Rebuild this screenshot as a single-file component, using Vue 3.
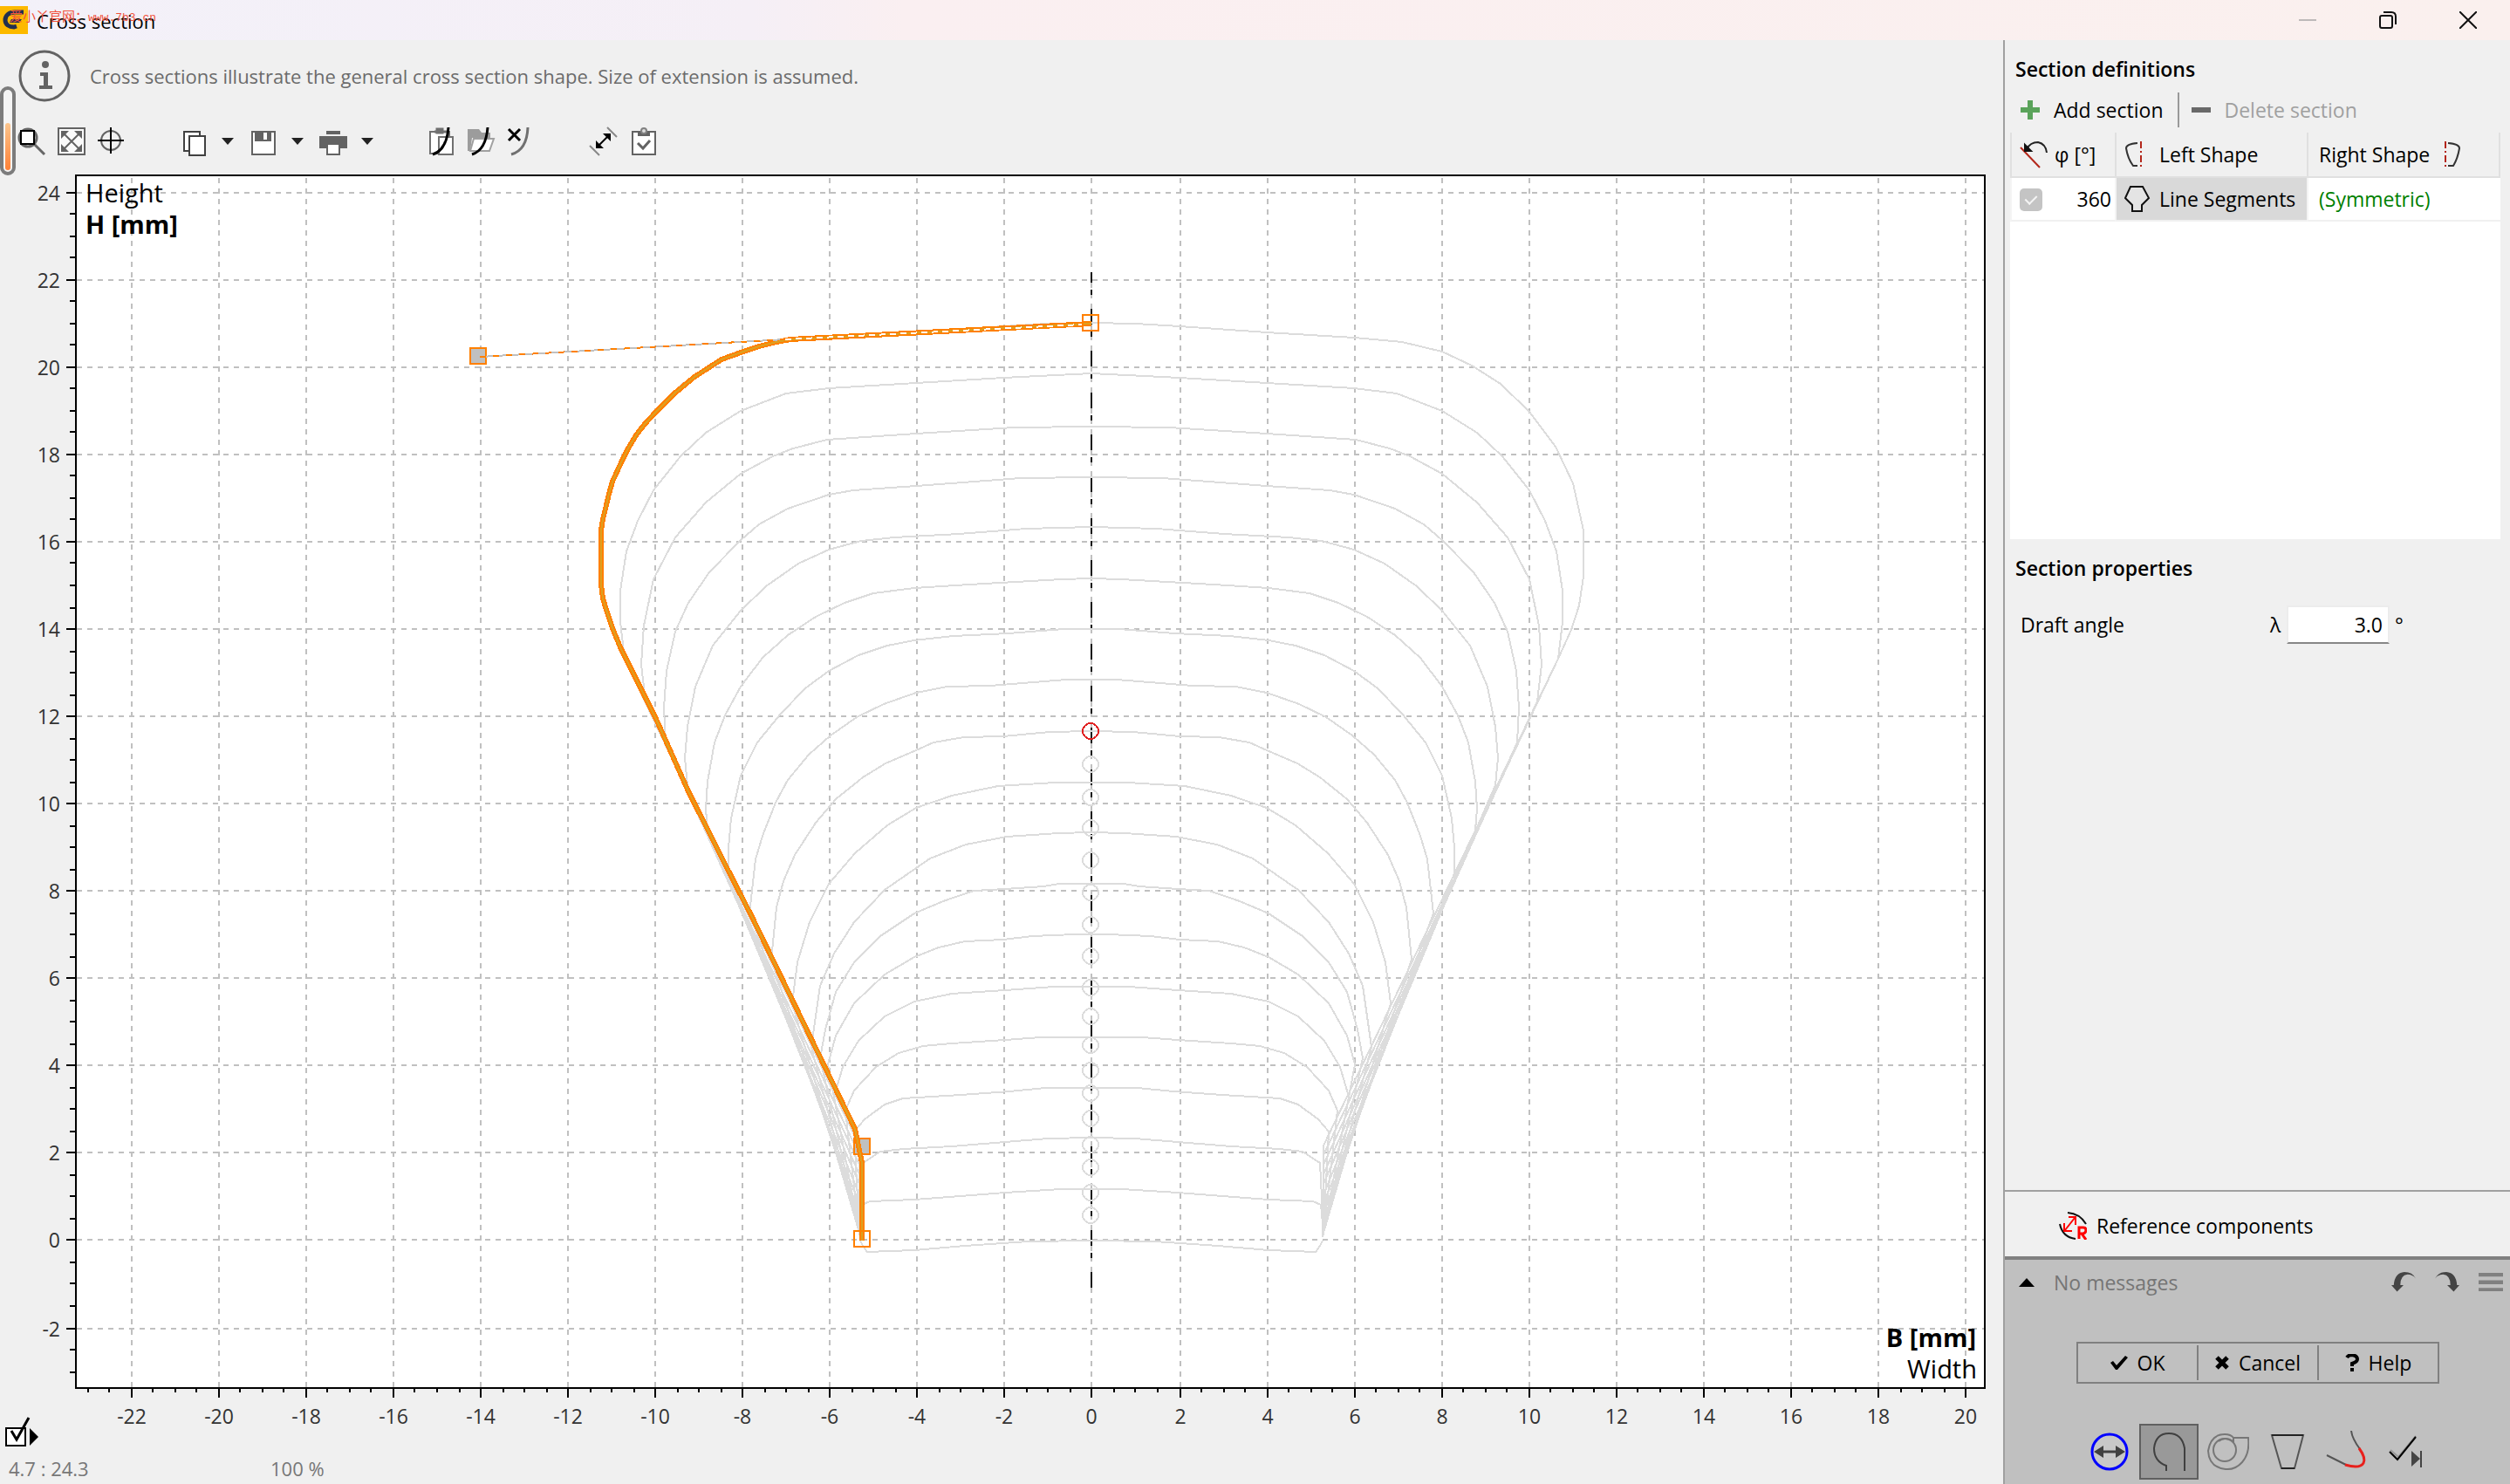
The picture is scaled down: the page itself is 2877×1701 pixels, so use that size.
<script setup>
import { ref } from 'vue'

const draftAngle = ref('3.0')

const px = v => 2 * Math.floor(625.95 + 25.03 * v) + 1
const py = v => 2 * Math.floor(710.95 - 25.03 * v) + 1

const range = (from, to, step) => {
  const out = []
  for (let v = from; v <= to; v += step) out.push(v)
  return out
}
const xMajor = range(-22, 20, 2)
const yMajor = range(-2, 24, 2)
const xMinor = range(-23, 20, 0.5).filter(v => v % 2 !== 0)
const yMinor = range(-3, 24, 0.5).filter(v => v % 2 !== 0)

const axisX = 1251

// Right half of every cross section, from the crown down to the flank
const sections = [
  '1251,370 1301,371 1352,374 1452,381 1552,387 1607,392 1653,403 1687,419 1720,440 1753,472 1783,512 1803,554 1815,608 1815,661 1810,694 1801,722 1785,757',
  '1251,428 1352,433 1452,439 1552,445 1601,451 1653,471 1693,496 1722,523 1753,562 1771,597 1784,632 1791,677 1791,713 1786,755',
  '1251,489 1340,490 1452,497 1554,504 1593,514 1616,523 1653,543 1693,576 1728,616 1753,664 1764,717 1767,762 1762,804',
  '1251,547 1332,548 1452,557 1524,562 1552,567 1599,583 1632,601 1654,620 1689,656 1713,691 1728,724 1738,769 1741,811 1739,851',
  '1251,604 1326,606 1403,612 1477,616 1515,620 1552,630 1587,646 1624,672 1653,700 1685,740 1705,787 1714,833 1717,869 1714,900',
  '1251,663 1285,664 1391,670 1454,674 1501,680 1534,691 1567,707 1599,728 1628,754 1653,787 1671,820 1683,851 1691,896 1693,927 1691,952',
  '1251,721 1283,721 1346,726 1409,729 1454,734 1485,740 1518,751 1552,769 1579,789 1607,818 1634,851 1653,889 1664,938 1667,972 1667,1001',
  '1251,779 1280,779 1367,786 1416,787 1452,794 1489,807 1520,822 1550,843 1575,865 1599,894 1613,920 1628,958 1636,985 1643,1047',
  '1251,838 1299,839 1352,844 1397,845 1432,851 1452,860 1487,875 1513,891 1544,916 1567,943 1591,980 1604,1010 1612,1040 1618,1100',
  '1251,897 1293,897 1358,901 1411,912 1452,926 1485,946 1522,978 1552,1013 1574,1057 1588,1103 1594,1150',
  '1251,954 1289,955 1348,959 1395,968 1436,984 1488,1020 1523,1057 1546,1093 1562,1130 1572,1200',
  '1251,1013 1288,1013 1306,1016 1350,1019 1386,1021 1421,1033 1454,1047 1493,1073 1523,1103 1544,1137 1556,1180 1562,1213',
  '1251,1071 1270,1071 1319,1073 1352,1077 1396,1079 1426,1086 1454,1097 1488,1117 1523,1150 1544,1187 1553,1220',
  '1251,1131 1294,1131 1350,1135 1411,1139 1454,1148 1488,1165 1518,1193 1536,1223 1546,1257',
  '1251,1189 1309,1189 1350,1192 1411,1196 1444,1199 1472,1207 1498,1223 1523,1250 1533,1273',
  '1251,1247 1304,1247 1345,1251 1401,1255 1467,1259 1488,1266 1511,1283 1523,1297',
  '1251,1304 1301,1305 1350,1309 1411,1314 1467,1317 1493,1320 1513,1333',
  '1251,1363 1286,1363 1350,1367 1401,1371 1454,1375 1505,1377 1514,1381',
].map((points, i) => `${points} 1517,${Math.round(1313 + 100 * Math.min(1, i / 9))} 1516,1418`)
sections.push('1251,1422 1324,1423 1396,1428 1454,1433 1508,1435 1513,1428 1516,1422')

const mirror = points =>
  points.split(' ').map(p => {
    const [x, y] = p.split(',').map(Number)
    return `${2 * axisX - x},${y}`
  }).join(' ')

const outlines = sections.flatMap(s => [s, mirror(s)])

const activeOutline =
  '1251,371 906,389 890,392 870,397 852,403 827,412 796,432 773,451 752,472 739,486 729,499 720,514 713,528 707,541 702,552 698,566 695,579 691,595 689,608 689,670 691,686 695,699 702,720 711,742 752,824 789,907 845,1018 861,1049 980,1294 988,1333 988,1422'

const centers = [876, 914, 949, 986, 1023, 1060, 1096, 1132, 1165, 1198, 1227, 1253, 1282, 1312, 1338, 1367, 1393]
</script>

<template>
  <div class="window">
    <header class="titlebar">
      <svg class="app-logo" viewBox="0 0 32 32">
        <rect width="32" height="32" fill="#fdb900" />
        <path d="M27 7H17C10 7 6 11 6 16c0 5 4 8 10 8l3-1" fill="none" stroke="#23304f" stroke-width="5" />
        <path d="M25 15H13l-2 4h11z" fill="#23304f" />
      </svg>
      <h1>Cross section</h1>
      <div class="watermark">爱小丫官网：<span>www.7b3.cn</span></div>
      <div class="controls">
        <button disabled aria-label="Minimize"><svg viewBox="0 0 20 20"><path d="M0 10h20" stroke="#bdb9b9" stroke-width="2" /></svg></button>
        <button aria-label="Restore"><svg viewBox="0 0 20 20" fill="none" stroke="#111" stroke-width="2"><rect x="1" y="5" width="14" height="14" rx="2" /><path d="M5 1h9q5 0 5 5v9" /></svg></button>
        <button aria-label="Close"><svg viewBox="0 0 20 20"><path d="M0 0l20 20M20 0L0 20" stroke="#111" stroke-width="2" /></svg></button>
      </div>
    </header>

    <div class="body">
      <main class="workspace">
        <div class="level"><i></i></div>
        <div class="info">
          <svg viewBox="0 0 60 60"><circle cx="30" cy="30" r="28" fill="none" stroke="#636363" stroke-width="3" /><circle cx="31" cy="17" r="4" fill="#636363" /><path d="M25 26h9v15h5v4H24v-4h5V30h-4z" fill="#636363" /></svg>
          <p>Cross sections illustrate the general cross section shape. Size of extension is assumed.</p>
        </div>

        <div class="toolbar" role="toolbar">
          <div class="group">
            <button aria-label="Zoom"><svg viewBox="0 0 32 32" fill="none"><circle cx="12" cy="12" r="10" stroke="#666" stroke-width="3" /><path d="M19 19l12 12" stroke="#666" stroke-width="3" /><rect x="4" y="4" width="15" height="15" fill="#fff" stroke="#000" stroke-width="2" /></svg></button>
            <button aria-label="Fit to window"><svg viewBox="0 0 32 32"><rect x="1" y="1" width="30" height="30" fill="#fafafa" stroke="#636363" stroke-width="2" /><path d="M7 7l18 18M25 7L7 25" stroke="#636363" stroke-width="2" /><path d="M4 4h9l-9 9zM28 4h-9l9 9zM4 28h9l-9-9zM28 28h-9l9-9z" fill="#636363" /></svg></button>
            <button aria-label="Center"><svg viewBox="0 0 32 32" fill="none"><circle cx="15" cy="15" r="11" stroke="#636363" stroke-width="2" /><path d="M15 0v30M0 15h30" stroke="#000" stroke-width="2" /></svg></button>
          </div>
          <div class="group wide">
            <div class="pair">
              <button aria-label="Copy"><svg viewBox="0 0 32 32" fill="#fff" stroke="#404040" stroke-width="2"><rect x="5" y="5" width="18" height="22" /><rect x="11" y="10" width="18" height="22" /></svg></button>
              <button class="caret" aria-label="Copy options"></button>
            </div>
            <div class="pair">
              <button aria-label="Save"><svg viewBox="0 0 32 32"><rect x="3" y="5" width="26" height="26" fill="#fff" stroke="#636363" stroke-width="2" /><path d="M6 4h19v12H6z" fill="#636363" /><path d="M16 6h4v8h-4z" fill="#fff" /></svg></button>
              <button class="caret" aria-label="Save options"></button>
            </div>
            <div class="pair">
              <button aria-label="Print"><svg viewBox="0 0 32 32"><path d="M8 4h16v4H8zM0 10h32v14H0z" fill="#636363" /><rect x="9" y="19" width="14" height="12" fill="#fff" stroke="#636363" stroke-width="2" /></svg></button>
              <button class="caret" aria-label="Print options"></button>
            </div>
          </div>
          <div class="group">
            <button aria-label="Paste curve"><svg viewBox="0 0 32 32" fill="#fff" stroke="#707070" stroke-width="2"><rect x="3" y="5" width="22" height="25" /><path d="M8 5h14M11 2h6v4h-6z" stroke-width="3" /><rect x="13" y="11" width="16" height="20" /><path d="M24 0q-2 26-18 31" fill="none" stroke="#000" stroke-width="3" /></svg></button>
            <button aria-label="Open curve"><svg viewBox="0 0 32 32"><path d="M0 2h13l3 4h10v6H5L3 27H0z" fill="#9c9c9c" /><path d="M7 13h23l-5 14H3z" fill="#fff" stroke="#a0a0a0" stroke-width="2" /><path d="M23 0q-2 26-18 31" fill="none" stroke="#000" stroke-width="3" /></svg></button>
            <button aria-label="Remove curve"><svg viewBox="0 0 32 32" fill="none"><path d="M23 0q-1 26-19 31" stroke="#707070" stroke-width="3" /><path d="M1 2l13 13M14 2L1 15" stroke="#000" stroke-width="3" /></svg></button>
          </div>
          <div class="group">
            <button aria-label="Measure"><svg viewBox="0 0 32 32"><path d="M0 21l11 11M20 0l11 11" stroke="#888" stroke-width="2" /><path d="M9 22L22 9" stroke="#000" stroke-width="2" /><path d="M7 24v-9l9 9zM24 7v9l-9-9z" fill="#000" /></svg></button>
            <button aria-label="Check"><svg viewBox="0 0 32 32"><rect x="3" y="5" width="26" height="26" fill="#fff" stroke="#636363" stroke-width="2" /><path d="M9 5h14v5H9z" fill="#636363" /><circle cx="16" cy="4" r="3" fill="#ddd" stroke="#808080" stroke-width="2" /><path d="M9 18l6 6 8-9" fill="none" stroke="#636363" stroke-width="3" /></svg></button>
          </div>
        </div>

        <svg class="chart" viewBox="0 190 2296 1450">
          <rect x="87" y="201" width="2188" height="1390" fill="#fff" />
          <g shape-rendering="crispEdges">
            <g stroke="#c0c0c0" stroke-width="2" stroke-dasharray="6 6">
              <line v-for="v in xMajor" :key="'gx' + v" :x1="px(v)" :x2="px(v)" y1="1590" y2="202" />
              <line v-for="v in yMajor" :key="'gy' + v" x1="88" x2="2274" :y1="py(v)" :y2="py(v)" />
            </g>
            <line :x1="axisX" :x2="axisX" y1="312" y2="1476" stroke="#111" stroke-width="2" stroke-dasharray="18 8 6 16" stroke-dashoffset="6" />
            <g fill="none" stroke="#dcdcdc" stroke-width="2">
              <polyline v-for="(line, i) in outlines" :key="'o' + i" :points="line" />
              <circle v-for="c in centers" :key="'c' + c" cx="1250" :cy="c" r="9" />
            </g>
            <circle cx="1250" cy="838" r="9" fill="none" stroke="#e02020" stroke-width="2" />
            <g fill="#c0c0c0" stroke="#ff8000" stroke-width="2">
              <rect x="539" y="399" width="18" height="18" />
              <rect x="979" y="1305" width="18" height="18" />
            </g>
            <polyline :points="activeOutline" fill="none" stroke="#ff8000" stroke-width="6" />
            <polyline :points="activeOutline" fill="none" stroke="#dda020" stroke-width="2" />
            <line x1="900" y1="389" x2="1240" y2="372" stroke="#fff" stroke-width="2" stroke-dasharray="7 5" />
            <line x1="550" y1="409" x2="900" y2="389" stroke="#c0c0c0" stroke-width="2" />
            <line x1="550" y1="409" x2="900" y2="389" stroke="#ff8000" stroke-width="2" stroke-dasharray="7 8" />
            <g fill="none" stroke="#ff8000" stroke-width="2">
              <rect x="1241" y="361" width="18" height="18" />
              <rect x="979" y="1411" width="18" height="18" />
            </g>
            <rect x="87" y="201" width="2188" height="1390" fill="none" stroke="#000" stroke-width="2" />
            <g stroke="#000" stroke-width="2">
              <line v-for="v in xMajor" :key="'tx' + v" :x1="px(v)" :x2="px(v)" y1="1592" y2="1602" />
              <line v-for="v in xMinor" :key="'sx' + v" :x1="px(v)" :x2="px(v)" y1="1592" y2="1596" />
              <line v-for="v in yMajor" :key="'ty' + v" x1="76" x2="86" :y1="py(v)" :y2="py(v)" />
              <line v-for="v in yMinor" :key="'sy' + v" x1="80" x2="86" :y1="py(v)" :y2="py(v)" />
            </g>
          </g>
          <g class="ticks">
            <text v-for="v in xMajor" :key="'lx' + v" :x="px(v)" y="1632" text-anchor="middle">{{ v }}</text>
            <text v-for="v in yMajor" :key="'ly' + v" x="69" :y="py(v) + 9" text-anchor="end">{{ v }}</text>
          </g>
          <g class="axis-title">
            <text x="98" y="232">Height</text>
            <text x="98" y="268" class="strong">H [mm]</text>
            <text x="2265" y="1544" text-anchor="end" class="strong">B [mm]</text>
            <text x="2266" y="1580" text-anchor="end">Width</text>
          </g>
        </svg>

        <footer class="status">
          <button class="display-options" aria-label="Display options"><svg viewBox="0 0 38 34"><rect x="1" y="13" width="22" height="20" fill="#fff" stroke="#000" stroke-width="2" /><path d="M7 16l6 10L27 1" fill="none" stroke="#000" stroke-width="3" /><path d="M28 13l10 10-10 10z" /></svg></button>
          <span class="coords">4.7 : 24.3</span>
          <span>100 %</span>
        </footer>
      </main>

      <aside class="panel">
        <section class="definitions">
          <h2>Section definitions</h2>
          <div class="actions">
            <button><svg viewBox="0 0 22 22"><path d="M8 0h6v8h8v6h-8v8H8v-8H0V8h8z" fill="#5aa35a" /></svg>Add section</button>
            <button class="delete" disabled><svg viewBox="0 0 22 22"><path d="M0 8h22v6H0z" fill="#696969" /></svg>Delete section</button>
          </div>
          <div class="table-box">
            <table>
              <colgroup><col class="c-angle"><col class="c-left"><col></colgroup>
              <thead>
                <tr>
                  <th><div class="cell angle"><svg viewBox="0 0 32 32" fill="none" stroke-width="2"><path d="M1 8l22 23" stroke="#b3261a" /><path d="M8 10Q12 2 21 2q9 2 10 12" stroke="#222" /><path d="M6 5v7h7z" fill="#111" stroke="#111" /></svg>φ [°]</div></th>
                  <th><div class="cell"><svg viewBox="0 0 32 32" fill="none" stroke-width="2"><path d="M15 3Q2 4 2 9q2 12 8 20h5" stroke="#333" /><path d="M19 1v30" stroke="#b3261a" stroke-dasharray="8 3 2 3" /></svg>Left Shape</div></th>
                  <th><div class="cell">Right Shape<svg class="right-icon" viewBox="0 0 32 32" fill="none" stroke-width="2"><path d="M2 1v30" stroke="#b3261a" stroke-dasharray="8 3 2 3" /><path d="M5 3q13 1 13 6-2 12-7 20H5" stroke="#333" /></svg></div></th>
                </tr>
              </thead>
              <tbody>
                <tr>
                  <td><div class="cell angle"><input type="checkbox" checked disabled aria-label="Section active"><span class="value">360</span></div></td>
                  <td class="selected"><div class="cell"><svg viewBox="0 0 32 32"><path d="M7 2h14l7 13-8 8v7H9v-7L1 15z" fill="#e4e4e4" stroke="#111" stroke-width="2" /></svg>Line Segments</div></td>
                  <td><div class="cell symmetric">(Symmetric)</div></td>
                </tr>
              </tbody>
            </table>
          </div>
        </section>

        <section class="properties">
          <h2>Section properties</h2>
          <div class="field">
            <label for="draft">Draft angle</label>
            <span class="symbol">λ</span>
            <input id="draft" v-model="draftAngle" type="text">
            <span class="unit">°</span>
          </div>
        </section>

        <button class="reference"><svg viewBox="0 0 32 32" fill="none" stroke-width="2"><path d="M10 1q14 1 21 13M1 14q3 15 18 17" stroke="#111" /><path d="M7 21L18 7M6 13v9h9M11 6h8v9" stroke="#f00" /><path d="M23 31V18h5q3 0 3 3t-3 4h-5M26 25l5 7" stroke="#f00" stroke-width="3" /></svg>Reference components</button>

        <div class="dock">
          <div class="messages">
            <button class="expand" aria-label="Expand messages"></button>
            <span>No messages</span>
            <div class="history">
              <button aria-label="Undo"><svg viewBox="0 0 30 24"><path d="M30 8Q26 0 16 0 4 1 3 16H0l7 8 8-8h-4q0-12 9-13 6 0 10 5z" fill="#444" /></svg></button>
              <button aria-label="Redo"><svg viewBox="0 0 30 24"><path d="M0 8Q4 0 14 0q12 1 13 16h3l-7 8-8-8h4Q19 4 10 3 4 3 0 8z" fill="#444" /></svg></button>
              <button aria-label="Menu"><svg viewBox="0 0 26 20"><path d="M0 0h26v4H0zM0 8h26v4H0zM0 16h26v4H0z" fill="#808080" /></svg></button>
            </div>
          </div>
          <div class="dialog-buttons">
            <button><svg viewBox="0 0 20 20"><path d="M0 10l3-2 4 5L17 2l3 2L8 18H6z" /></svg>OK</button>
            <button><svg viewBox="0 0 16 20"><path d="M2 4l12 12M14 4L2 16" stroke="#000" stroke-width="5" /></svg>Cancel</button>
            <button><svg viewBox="0 0 16 20"><path d="M2 4Q4 1 8 1q6 1 6 5 0 3-6 5v3M8 16v4" fill="none" stroke="#000" stroke-width="4" /></svg>Help</button>
          </div>
          <nav class="modes">
            <button aria-label="Diameter"><svg viewBox="0 0 48 48"><circle cx="24" cy="24" r="20" fill="#c8c8c8" stroke="#00f" stroke-width="3" /><path d="M12 24h24" stroke="#404040" stroke-width="3" /><path d="M6 24l11-7v14zM42 24l-11-7v14z" fill="#404040" /></svg></button>
            <button class="active" aria-label="Cross section"><svg viewBox="0 0 48 48" fill="none"><path d="M21 46v-6Q7 35 7 20 9 3 24 3t18 17v26" stroke="#404040" stroke-width="2" /></svg></button>
            <button aria-label="Volute"><svg viewBox="0 0 48 48" fill="none" stroke="#777" stroke-width="2"><circle cx="20" cy="22" r="13" /><path d="M29 8h18q2 18-7 28-8 9-19 8Q2 42 1 23 4 4 20 4q7 0 10 4v4Q20 6 13 12" /></svg></button>
            <button aria-label="Diffuser"><svg viewBox="0 0 48 48" fill="none"><path d="M6 5h36L32 43H17z" stroke="#555" stroke-width="2" /><path d="M6 5h36M17 43h15" stroke="#222" stroke-width="2" /></svg></button>
            <button aria-label="Cut-water"><svg viewBox="0 0 48 48" fill="none"><path d="M29 0q1 9 10 21M1 28l22 11" stroke="#555" stroke-width="2" /><path d="M38 20q8 11 5 17-4 7-21 2" stroke="#e8201c" stroke-width="3" /></svg></button>
            <button aria-label="Finish"><svg viewBox="0 0 48 48" fill="none"><path d="M6 22l9 8L35 6" stroke="#999" stroke-width="2" /><path d="M5 24l9 9L35 7" stroke="#000" stroke-width="2" /><path d="M30 23l10 9-10 9z" fill="#444" /><path d="M41 23v19" stroke="#444" stroke-width="2" /></svg></button>
          </nav>
        </div>
      </aside>
    </div>
  </div>
</template>

<style>
html, body { margin: 0; background: #f0f0f0; }
</style>

<style scoped>
.window {
  min-height: 100vh;
  display: flex;
  flex-direction: column;
  background: #f0f0f0;
  color: #000;
  font-family: "Open Sans", "Noto Sans", sans-serif;
  font-size: 23px;
  line-height: 32px;
}
svg { display: block; }
button {
  display: flex;
  align-items: center;
  padding: 0;
  border: 0;
  background: none;
  color: inherit;
  font: inherit;
}
h1, h2, p { margin: 0; font-size: inherit; }
h1 { padding-top: 2px; font-size: 22px; font-weight: 400; }
h2 { font-weight: 600; }

.titlebar {
  position: relative;
  display: flex;
  align-items: center;
  height: 46px;
  background: linear-gradient(90deg, #f3f1f9 0, #f5eff6 30%, #faeff1 36%, #faf0ee 100%);
}
.app-logo { width: 32px; height: 32px; }
h1 { margin-left: 10px; }
.watermark {
  position: absolute;
  left: 11px;
  top: 8px;
  color: #f0523c;
  font: 15px/20px "Noto Sans CJK SC", sans-serif;
  white-space: nowrap;
}
.watermark span { font-family: "Liberation Mono", monospace; font-size: 13px; }
.controls { display: flex; margin-left: auto; padding-right: 2px; }
.controls button { width: 92px; height: 46px; justify-content: center; }
.controls svg { width: 20px; }

.body { flex: 1; display: flex; }
.workspace { position: relative; flex: 1; min-width: 0; display: flex; flex-direction: column; }

.level {
  position: absolute;
  left: 0;
  top: 53px;
  box-sizing: border-box;
  width: 18px;
  height: 102px;
  padding: 2px;
  display: flex;
  align-items: flex-end;
  border: 4px solid #7c7c7c;
  border-radius: 9px;
  background: #f4f4f4;
}
.level i { width: 100%; height: 60%; border-radius: 3px; background: linear-gradient(#fbc58d, #ff8136); }

.info { display: flex; align-items: center; gap: 22px; height: 82px; padding-left: 21px; color: #6b6b6b; font-size: 22px; }
.info svg { width: 60px; }

.toolbar { display: flex; gap: 62px; height: 62px; padding-left: 20px; align-items: center; box-sizing: border-box; padding-top: 6px; }
.group { display: flex; gap: 14px; }
.group.wide { gap: 18px; }
.group svg { width: 32px; height: 32px; overflow: visible; }
.pair { display: flex; align-items: center; gap: 16px; }
.caret, .expand { width: 0; height: 0; border: 7px solid transparent; border-top: 8px solid #222; border-bottom: 0; }

.chart { width: 100%; }
.chart text { fill: #333; }
.chart .axis-title text { font-size: 29px; fill: #000; }
.chart .axis-title .strong { font-weight: 700; }

.status { position: relative; display: flex; margin-top: auto; padding: 0 10px; height: 34px; color: #777; font-size: 22px; }
.coords { width: 300px; }
.display-options { position: absolute; left: 6px; bottom: 43px; }
.display-options svg { width: 38px; }

.panel {
  width: 579px;
  flex: none;
  display: flex;
  flex-direction: column;
  border-left: 2px solid #a0a0a0;
}
.definitions { padding: 17px 11px 0 6px; }
h2 { padding-left: 6px; }
.actions { display: flex; align-items: center; height: 40px; margin: 11px 0 6px; padding-left: 12px; }
.actions button { height: 40px; padding-right: 16px; gap: 16px; }
.actions svg { width: 22px; }
.actions .delete { border-left: 2px solid #999; padding-left: 14px; color: #a0a0a0; }

.table-box { height: 466px; background: #fff; }
table { width: 100%; table-layout: fixed; border-collapse: separate; border-spacing: 0; }
.c-angle { width: 120px; }
.c-left { width: 220px; }
th, td { padding: 0; font-weight: 400; text-align: left; box-sizing: border-box; }
th { height: 52px; background: #f0f0f0; border-bottom: 2px solid #e0e0e0; border-left: 2px solid #e0e0e0; }
th:last-child { border-right: 2px solid #e0e0e0; }
td { height: 50px; border-bottom: 2px solid #f0f0f0; border-left: 2px solid #f4f4f4; }
.cell { display: flex; align-items: center; padding-left: 9px; gap: 8px; white-space: nowrap; }
.cell svg { width: 32px; flex: none; }
th:last-child .cell, td:last-child .cell { padding-left: 12px; }
.cell .right-icon { margin-left: 8px; }
.angle .value { margin-left: auto; padding-right: 4px; }
.selected { background: #d9d9d9; }
.symmetric { color: #008000; }
input[type="checkbox"] {
  appearance: none;
  position: relative;
  width: 26px;
  height: 26px;
  margin: 2px 0 0;
  border-radius: 5px;
  background: #c4c4c4;
}
input[type="checkbox"]::after {
  content: "";
  position: absolute;
  left: 9px;
  top: 5px;
  width: 6px;
  height: 11px;
  border: solid #f4f4f4;
  border-width: 0 2px 2px 0;
  transform: rotate(45deg);
}

.properties { padding: 17px 6px 0; }
.field { display: flex; align-items: center; margin-top: 27px; padding-left: 12px; }
.field label { width: 286px; }
.field .symbol { width: 19px; }
.field input {
  box-sizing: border-box;
  width: 118px;
  height: 44px;
  padding: 0 6px;
  border: 2px solid #ececec;
  border-bottom-color: #868686;
  background: #fff;
  color: #000;
  font: inherit;
  text-align: right;
}
.unit { margin-left: 6px; }

.reference { box-sizing: border-box; margin-top: auto; height: 76px; padding: 3px 0 0 62px; gap: 11px; border-top: 2px solid #a0a0a0; }
.reference svg { width: 32px; }

.dock { height: 261px; box-sizing: border-box; border-top: 4px solid #808080; background: #c0c0c0; }
.messages { display: flex; align-items: center; height: 51px; padding: 0 8px 0 16px; color: #757575; }
.expand { border: 9px solid transparent; border-bottom: 10px solid #000; border-top: 0; }
.messages > span { margin-left: 22px; }
.history { display: flex; align-items: center; gap: 22px; margin-left: auto; }
.history svg { width: 28px; }
.dialog-buttons { display: flex; width: 416px; height: 48px; box-sizing: border-box; margin: 43px 0 0 82px; padding: 2px 0; border: 2px solid #808080; }
.dialog-buttons button { flex: 1; justify-content: center; gap: 11px; }
.dialog-buttons button + button { border-left: 2px solid #808080; }
.dialog-buttons svg { height: 20px; }
.modes { display: flex; align-items: center; margin: 46px 0 0 86px; }
.modes button { box-sizing: border-box; width: 68px; height: 64px; justify-content: center; border: 2px solid transparent; }
.modes .active { background: #999; border-color: #606060; }
.modes svg { width: 48px; }
</style>
